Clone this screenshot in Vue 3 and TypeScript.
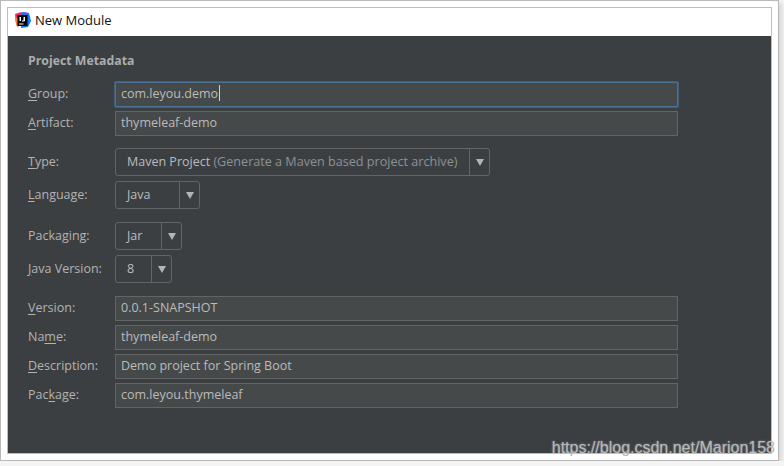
<template>
  <div class="frame">
    <div class="window">
      <header class="titlebar">
        <svg class="logo" width="16" height="16" viewBox="0 0 16 16">
          <path d="M0 2 L6 0 L9 3 L3 15 L1 12 Z" fill="#f0286f" />
          <path d="M0 7 L3 5 L5 13 L2 15 Z" fill="#fc801d" />
          <path d="M7 0 L14 1 L16 9 L13 15 L6 16 Z" fill="#087cfa" />
          <path d="M8 0 L14 1 L12 4 Z" fill="#7b4be0" />
          <rect x="2.5" y="3" width="10" height="11" fill="#000" />
          <rect x="4.5" y="5" width="1.5" height="4" fill="#fff" />
          <rect x="8.5" y="5" width="1.5" height="4" fill="#fff" />
          <rect x="7" y="8.5" width="2.5" height="1" fill="#fff" />
          <rect x="4" y="11.5" width="4.5" height="1" fill="#fff" />
        </svg>
        <span>New Module</span>
      </header>

      <main class="panel">
        <h1 class="heading">Project Metadata</h1>

        <section class="group fields">
          <div class="row">
            <label><u>G</u>roup:</label>
            <div class="input focused">com.leyou.demo<i class="caret" /></div>
          </div>
          <div class="row">
            <label><u>A</u>rtifact:</label>
            <div class="input">thymeleaf-demo</div>
          </div>
        </section>

        <section class="group combos">
          <div class="row">
            <label><u>T</u>ype:</label>
            <div class="combo type">
              <span class="value">Maven Project <em>(Generate a Maven based project archive)</em></span>
              <span class="arrow" />
            </div>
          </div>
          <div class="row">
            <label><u>L</u>anguage:</label>
            <div class="combo language">
              <span class="value">Java</span>
              <span class="arrow" />
            </div>
          </div>
        </section>

        <section class="group combos">
          <div class="row">
            <label>Packa<u>g</u>ing:</label>
            <div class="combo packaging">
              <span class="value">Jar</span>
              <span class="arrow" />
            </div>
          </div>
          <div class="row">
            <label><u>J</u>ava Version:</label>
            <div class="combo java">
              <span class="value">8</span>
              <span class="arrow" />
            </div>
          </div>
        </section>

        <section class="group fields">
          <div class="row">
            <label><u>V</u>ersion:</label>
            <div class="input">0.0.1-SNAPSHOT</div>
          </div>
          <div class="row">
            <label>Na<u>m</u>e:</label>
            <div class="input">thymeleaf-demo</div>
          </div>
          <div class="row">
            <label><u>D</u>escription:</label>
            <div class="input">Demo project for Spring Boot</div>
          </div>
          <div class="row">
            <label>Pac<u>k</u>age:</label>
            <div class="input">com.leyou.thymeleaf</div>
          </div>
        </section>
      </main>
    </div>
    <div class="watermark">https://blog.csdn.net/Marion158</div>
  </div>
</template>

<script setup lang="ts">
</script>

<style>
html,
body {
  background: #f4f4f4;
  overflow: hidden;
}
</style>

<style scoped>
.frame {
  position: relative;
  box-sizing: border-box;
  width: 779px;
  height: 461px;
  padding: 6px;
  background: #fff;
  border: 1px solid #b9b9b9;
  box-shadow: 3px 3px 4px #d8d8d8;
  font-family: "Open Sans", "Noto Sans", sans-serif;
  font-size: 12.5px;
}

.window {
  box-sizing: border-box;
  height: 447px;
  width: 765px;
  display: flex;
  flex-direction: column;
  border: 1px solid #bdbdbd;
}

.titlebar {
  box-sizing: border-box;
  height: 28px;
  flex: none;
  display: flex;
  align-items: center;
  gap: 4px;
  padding: 0 0 4px 7px;
  background: #fff;
  color: #111;
  font-size: 13px;
}

.logo {
  flex: none;
}

.panel {
  flex: 1;
  background: #3c3f41;
  padding: 17px 0 0 20px;
  color: #bbb;
}

.heading {
  margin: 0 0 13px;
  height: 16px;
  line-height: 16px;
  font-size: 12.3px;
  font-weight: 700;
  color: #a9adb0;
}

.group {
  display: flex;
  flex-direction: column;
  margin-bottom: 12px;
}

.fields {
  gap: 4px;
}

.combos {
  gap: 5px;
  margin-bottom: 13px;
}

.row {
  display: flex;
  align-items: center;
}

label {
  width: 87px;
  flex: none;
  padding-bottom: 2px;
  color: #b3b3b3;
}

u {
  text-underline-offset: 2px;
}

.input {
  box-sizing: border-box;
  width: 563px;
  height: 25px;
  line-height: 22px;
  padding-left: 5px;
  background: #45494a;
  border: 1px solid #646464;
  color: #bbb;
}

.focused {
  border-color: #4a7299;
  box-shadow: 0 0 0 1px #3d5f80;
  border-radius: 1px;
}

.caret {
  display: inline-block;
  width: 1px;
  height: 16px;
  margin-left: 1px;
  vertical-align: -3px;
  background: #d0d0d0;
}

.combo {
  box-sizing: border-box;
  height: 28px;
  display: flex;
  align-items: center;
  background: #3c3f41;
  border: 1px solid #646464;
  border-radius: 3px;
}

.type {
  width: 375px;
}

.language {
  width: 85px;
}

.packaging {
  width: 67px;
}

.java {
  width: 57px;
}

.value {
  flex: 1;
  padding-left: 11px;
  padding-bottom: 1px;
  white-space: nowrap;
  color: #bbb;
}

em {
  font-style: normal;
  font-size: 12.6px;
  color: #8c9196;
}

.arrow {
  flex: none;
  box-sizing: border-box;
  width: 20px;
  height: 100%;
  border-left: 1px solid #646464;
  display: flex;
  align-items: center;
  justify-content: center;
}

.arrow::after {
  content: "";
  border-left: 4px solid transparent;
  border-right: 4px solid transparent;
  border-top: 7px solid #b4b4b4;
}

.watermark {
  position: absolute;
  right: 3px;
  bottom: 2px;
  font-family: "Liberation Sans", sans-serif;
  font-size: 16px;
  line-height: 20px;
  color: #b8b8b8;
  text-shadow: 0 0 2px rgba(255, 255, 255, 0.5);
  white-space: nowrap;
}
</style>
